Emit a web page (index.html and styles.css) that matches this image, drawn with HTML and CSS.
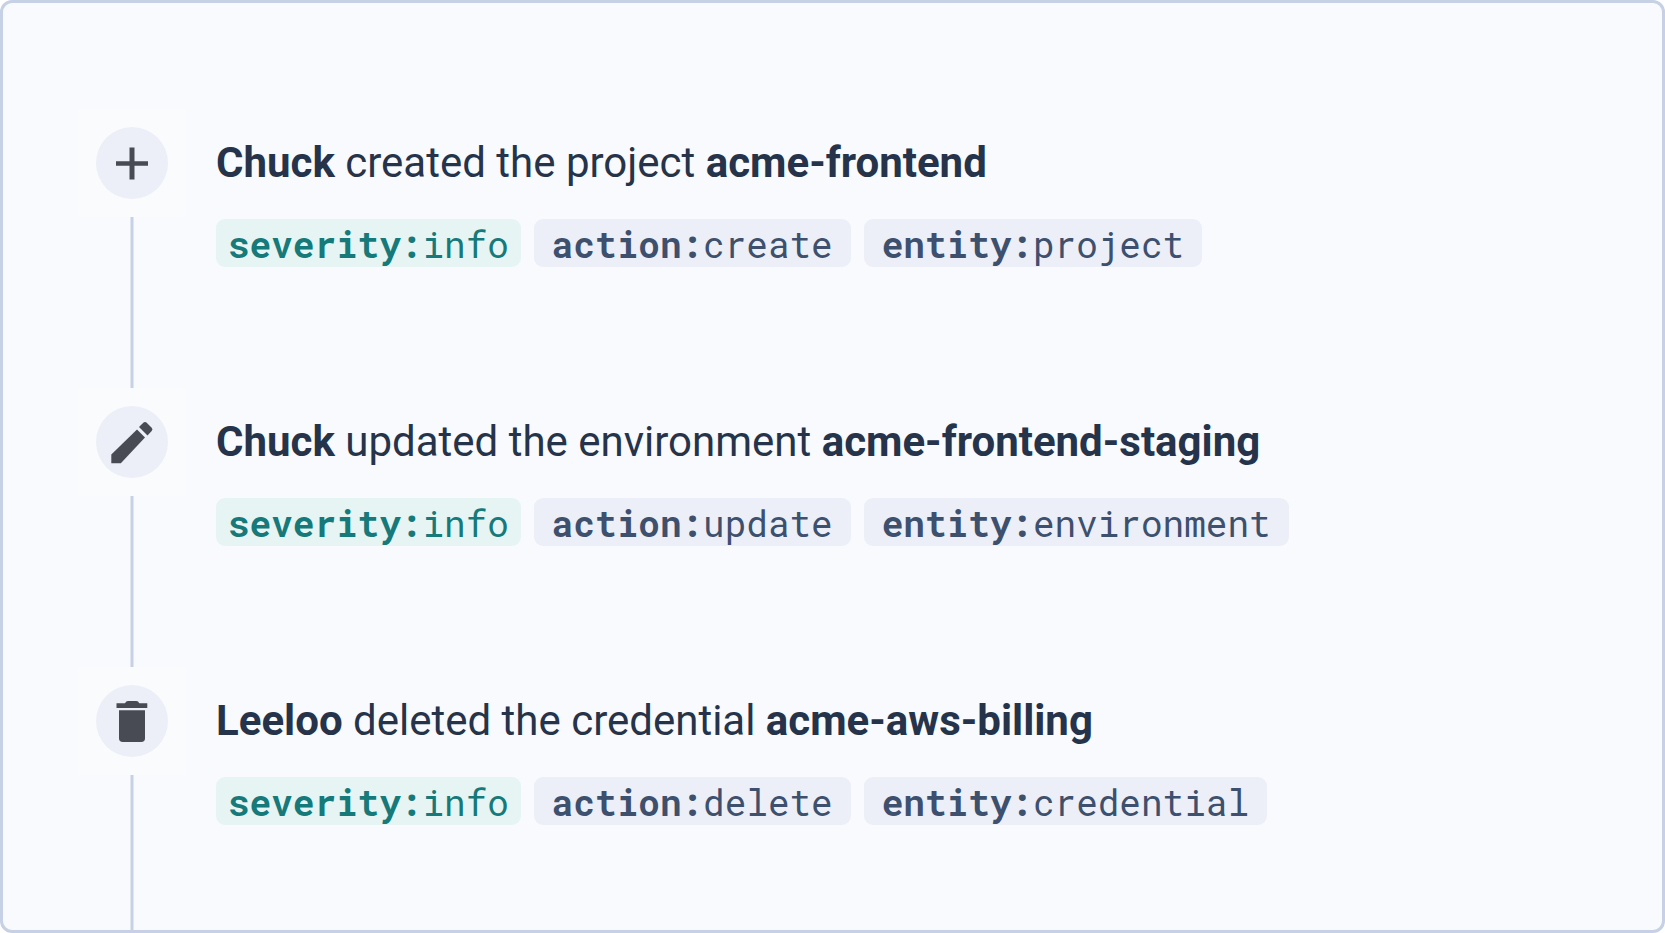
FILE: index.html
```html
<!DOCTYPE html>
<html lang="en">
<head>
    <meta charset="UTF-8">
    <meta name="viewport" content="width=device-width, initial-scale=1.0">
    <title>Activity log</title>
    <link rel="stylesheet" href="styles.css">
</head>
<body>
    <main class="panel">
        <ol class="timeline">
            <li class="event">
                <div class="rail">
                    <div class="marker">
                        <svg class="icon" viewBox="0 0 72 72" aria-hidden="true">
                            <path d="M33.5 20.5h5v13.7H52v4.6H38.5v13.7h-5V38.8H20v-4.6h13.5z"/>
                        </svg>
                    </div>
                </div>
                <div class="details">
                    <p class="title"><strong>Chuck</strong> created the project <strong>acme-frontend</strong></p>
                    <div class="tags">
                        <span class="tag tag-info"><b>severity:</b>info</span>
                        <span class="tag"><b>action:</b>create</span>
                        <span class="tag"><b>entity:</b>project</span>
                    </div>
                </div>
            </li>

            <li class="event">
                <div class="rail">
                    <div class="marker">
                        <svg class="icon" viewBox="0 0 72 72" aria-hidden="true">
                            <path d="M15.3 48.4 41 23.6l8 8L24.8 57.2h-9.5z"/>
                            <path d="M43 21l4.3-4.3q1.7-1.4 3.4 0l5 5q1.5 1.6 0 3.3L51.5 29.5z"/>
                        </svg>
                    </div>
                </div>
                <div class="details">
                    <p class="title"><strong>Chuck</strong> updated the environment <strong>acme-frontend-staging</strong></p>
                    <div class="tags">
                        <span class="tag tag-info"><b>severity:</b>info</span>
                        <span class="tag"><b>action:</b>update</span>
                        <span class="tag"><b>entity:</b>environment</span>
                    </div>
                </div>
            </li>

            <li class="event">
                <div class="rail">
                    <div class="marker">
                        <svg class="icon" viewBox="0 0 72 72" aria-hidden="true">
                            <path d="M20.5 18.2H29q1-2.2 3-2.2h8.3q2 0 3 2.2h8V23H20.5z"/>
                            <path d="M23 25.2h26v28q0 3.8-3.8 3.8H26.8Q23 57 23 53.2z"/>
                        </svg>
                    </div>
                </div>
                <div class="details">
                    <p class="title"><strong>Leeloo</strong> deleted the credential <strong>acme-aws-billing</strong></p>
                    <div class="tags">
                        <span class="tag tag-info"><b>severity:</b>info</span>
                        <span class="tag"><b>action:</b>delete</span>
                        <span class="tag"><b>entity:</b>credential</span>
                    </div>
                </div>
            </li>
        </ol>
    </main>
</body>
</html>
```
FILE: styles.css
```css
* {
    box-sizing: border-box;
}

body {
    margin: 0;
    background-color: #fff;
    font-family: Roboto, sans-serif;
    color: #26344b;
}

.panel {
    display: flex;
    min-height: 100vh;
    padding: 106px 75px 0;
    background-color: #f8fafd;
    border: 3px solid #c6d1e5;
    border-radius: 12px;
}

.timeline {
    display: flex;
    flex: 1;
    flex-direction: column;
    margin: 0;
    padding: 0;
    list-style: none;
}

.event {
    display: flex;
    gap: 30px;
    min-height: 279px;
}

/* the last line runs down to the edge of the panel */
.event:last-child {
    flex: 1;
    min-height: 180px;
}

.rail {
    display: flex;
    flex-direction: column;
    align-items: center;
}

.rail::after {
    content: "";
    flex: 1;
    width: 2px;
    border: solid #dfe6f1;
    border-width: 0 1px;
    background-color: #c6d1e5;
    background-clip: padding-box;
}

.marker {
    padding: 18px;
    background-color: #fafbfd;
}

.icon {
    display: block;
    width: 72px;
    height: 72px;
    border-radius: 50%;
    background-color: #eceff7;
    fill: #484b54;
}

.details {
    padding-top: 30px;
}

.title {
    margin: 0 0 32px;
    font-size: 42px;
    line-height: 48px;
}

.title strong {
    font-weight: 700;
}

.tags {
    display: flex;
    flex-wrap: wrap;
    gap: 13px;
}

.tag {
    padding: 3px 18px 0;
    border-radius: 9px;
    background-color: #eceff7;
    color: #3d506e;
    font-family: "Roboto Mono", "DejaVu Sans Mono", monospace;
    font-size: 36px;
    line-height: 45px;
}

.tag-info {
    padding: 3px 12px 0;
    background-color: #e6f5f4;
    color: #16797a;
}
```
